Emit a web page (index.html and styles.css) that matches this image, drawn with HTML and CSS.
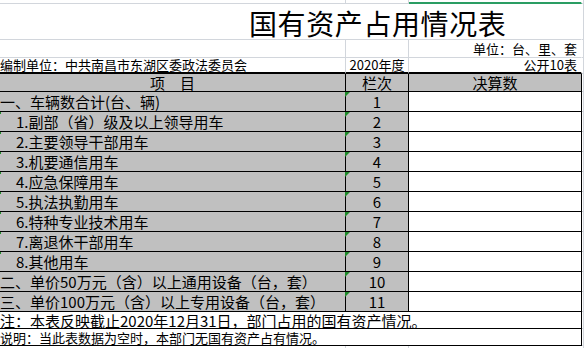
FILE: index.html
```html
<!DOCTYPE html>
<html lang="zh-CN">
<head>
<meta charset="utf-8">
<title>国有资产占用情况表</title>
<link rel="stylesheet" href="styles.css">
</head>
<body>
<div class="sheet">
  <!-- partial row above -->
  <div class="c gr gb"></div>
  <div class="c gr gb"></div>
  <div class="c sel"></div>
  <div class="c gr gb"></div>

  <!-- title -->
  <div class="c span3 gb title">国有资产占用情况表</div>
  <div class="c gr gb"></div>

  <!-- unit -->
  <div class="c gr gb"></div>
  <div class="c gr gb"></div>
  <div class="c gb small right">单位：台、里、套</div>
  <div class="c gr gb"></div>

  <!-- org -->
  <div class="c gr thick small">编制单位：中共南昌市东湖区委政法委员会</div>
  <div class="c gr thick small center">2020年度</div>
  <div class="c thick small right">公开10表</div>
  <div class="c gr gb"></div>

  <!-- header -->
  <div class="c gray lr lb center">项　目</div>
  <div class="c gray lr lb center">栏次</div>
  <div class="c gray lr lb center">决算数</div>
  <div class="c gr gb"></div>

  <div class="c gray lr lb">一、车辆数合计(台、辆)</div>
  <div class="c gray lr lb center tri">1</div>
  <div class="c lr lb"></div>
  <div class="c gr gb"></div>

  <div class="c gray lr lb ind mark">1.副部（省）级及以上领导用车</div>
  <div class="c gray lr lb center tri">2</div>
  <div class="c lr lb"></div>
  <div class="c gr gb"></div>

  <div class="c gray lr lb ind mark">2.主要领导干部用车</div>
  <div class="c gray lr lb center tri">3</div>
  <div class="c lr lb"></div>
  <div class="c gr gb"></div>

  <div class="c gray lr lb ind mark">3.机要通信用车</div>
  <div class="c gray lr lb center tri">4</div>
  <div class="c lr lb"></div>
  <div class="c gr gb"></div>

  <div class="c gray lr lb ind mark">4.应急保障用车</div>
  <div class="c gray lr lb center tri">5</div>
  <div class="c lr lb"></div>
  <div class="c gr gb"></div>

  <div class="c gray lr lb ind mark">5.执法执勤用车</div>
  <div class="c gray lr lb center tri">6</div>
  <div class="c lr lb"></div>
  <div class="c gr gb"></div>

  <div class="c gray lr lb ind mark">6.特种专业技术用车</div>
  <div class="c gray lr lb center tri">7</div>
  <div class="c lr lb"></div>
  <div class="c gr gb"></div>

  <div class="c gray lr lb ind mark">7.离退休干部用车</div>
  <div class="c gray lr lb center tri">8</div>
  <div class="c lr lb"></div>
  <div class="c gr gb"></div>

  <div class="c gray lr lb ind mark">8.其他用车</div>
  <div class="c gray lr lb center tri">9</div>
  <div class="c lr lb"></div>
  <div class="c gr gb"></div>

  <div class="c gray lr lb">二、单价50万元（含）以上通用设备（台，套）</div>
  <div class="c gray lr lb center tri">10</div>
  <div class="c lr lb"></div>
  <div class="c gr gb"></div>

  <div class="c gray lr lb">三、单价100万元（含）以上专用设备（台，套）</div>
  <div class="c gray lr lb center tri">11</div>
  <div class="c lr lb"></div>
  <div class="c gr gb"></div>

  <div class="c span3 lr lb note">注：本表反映截止2020年12月31日，部门占用的国有资产情况。</div>
  <div class="c gr gb"></div>

  <div class="c span3 lr lb note2">说明：当此表数据为空时，本部门无国有资产占有情况。</div>
  <div class="c gr gb"></div>

  <!-- partial row below -->
  <div class="c gr"></div>
  <div class="c gr"></div>
  <div class="c"></div>
  <div class="c gr"></div>
</div>
</body>
</html>
```

FILE: styles.css
```css
* {
  box-sizing: border-box;
  margin: 0;
  padding: 0;
}

html, body {
  background: #ffffff;
  overflow: hidden;
}

body {
  margin: 0;
  font-family: "Noto Sans CJK SC", "Noto Sans", sans-serif;
  color: #000000;
}

.sheet {
  display: grid;
  grid-template-columns: 346px 63px 173px 2px;
  grid-template-rows: 4px 36px 18px 16px 18px repeat(11, 20px) 17px 17px 3px;
  width: 585px;
}

.c {
  position: relative;
  display: flex;
  align-items: center;
  white-space: nowrap;
  font-size: 15px;
  line-height: 1;
  border-right: 1px solid transparent;
  border-bottom: 1px solid transparent;
}

.gr { border-right-color: #d2d6dc; }
.gb { border-bottom-color: #d2d6dc; }
.lr { border-right-color: #000000; }
.lb { border-bottom-color: #000000; }

.thick {
  border-bottom: 2px solid #000000;
  align-items: flex-end;
  padding-bottom: 1px;
}

.sel {
  border-bottom: 2px solid #2a9d63;
}

.span3 {
  grid-column: span 3;
}

.gray {
  background: #c0c0c0;
}

.title {
  font-size: 28px;
  letter-spacing: 0.6px;
  padding-left: 249px;
  padding-top: 3px;
}

.small {
  font-size: 13px;
}

.right {
  justify-content: flex-end;
  padding-right: 4px;
}

.center {
  justify-content: center;
}

.ind {
  padding-left: 16px;
}

.note {
  font-size: 15px;
}

.note2 {
  font-size: 13px;
}

.tri::before {
  content: "";
  position: absolute;
  left: -1px;
  top: 0;
  border-top: 5px solid #1e8a2a;
  border-right: 5px solid transparent;
}

.mark::before {
  content: "";
  position: absolute;
  left: 0;
  top: 0;
  width: 1px;
  height: 2px;
  background: #1e8a2a;
}
```
